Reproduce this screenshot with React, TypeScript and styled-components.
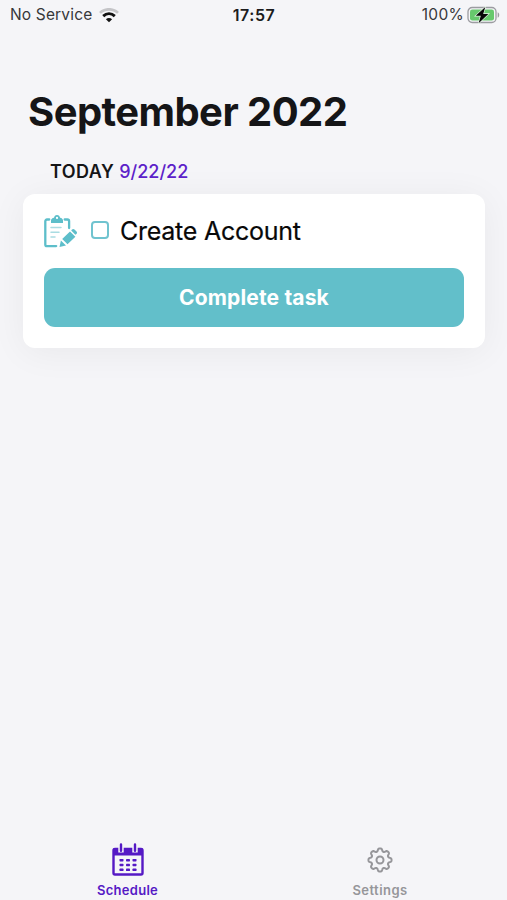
import React from "react";
import styled, { createGlobalStyle } from "styled-components";

const GlobalStyle = createGlobalStyle`
  * { box-sizing: border-box; }
  html, body { margin: 0; padding: 0; background: #f5f5f8; }
`;

const Screen = styled.main`
  display: flex;
  flex-direction: column;
  height: 900px;
  width: 507px;
  overflow: hidden;
  background: #f5f5f8;
  font-family: Inter, "Liberation Sans", sans-serif;
  color: #151517;
`;

const StatusBar = styled.header`
  display: grid;
  grid-template-columns: 1fr auto 1fr;
  align-items: center;
  height: 30px;
  padding: 0 7px 0 10px;
  font-size: 15.5px;
  line-height: 20px;
  color: #37373a;
`;

const StatusGroup = styled.div<{ $end?: boolean }>`
  display: flex;
  align-items: center;
  justify-content: ${(p) => (p.$end ? "flex-end" : "flex-start")};
  gap: ${(p) => (p.$end ? "3px" : "7px")};
  letter-spacing: ${(p) => (p.$end ? "0.3px" : "0.16px")};
`;

const Clock = styled.time`
  margin-right: 2px;
  font-size: 16px;
  font-weight: 600;
  color: #1c1c1e;
  letter-spacing: 0.5px;
`;

const Content = styled.section`
  flex: 1;
  padding: 58px 22px 0 23px;
`;

const Title = styled.h1`
  margin: 0 0 0 5px;
  font-size: 40px;
  line-height: 48px;
  font-weight: 700;
  letter-spacing: -0.56px;
  white-space: nowrap;
`;

const DayLabel = styled.h2`
  display: flex;
  gap: 5px;
  margin: 24px 0 10px 27px;
  font-size: 18px;
  line-height: 24px;
  font-weight: 600;
  letter-spacing: 0.45px;
`;

const DayDate = styled.span`
  font-weight: 500;
  color: #5c21c9;
  letter-spacing: 0;
`;

const Card = styled.article`
  height: 154px;
  padding: 20px 21px 0;
  border-radius: 12px;
  background: #fff;
  box-shadow: 0 4px 36px rgba(0, 0, 0, 0.055);
`;

const TaskRow = styled.div`
  display: flex;
  align-items: center;
  height: 34px;
`;

const Checkbox = styled.span`
  width: 18px;
  height: 18px;
  margin: -3px 11px 0 14px;
  border: 2px solid #70c3cf;
  border-radius: 4px;
`;

const TaskName = styled.span`
  font-size: 25px;
  line-height: 32px;
  letter-spacing: -0.25px;
  color: #080808;
  -webkit-text-stroke: 0.2px #080808;
  white-space: nowrap;
`;

const CompleteButton = styled.button`
  display: block;
  width: 100%;
  height: 59px;
  margin: 20px 0 0;
  padding: 0;
  border: 0;
  border-radius: 11px;
  background: #62bfca;
  color: #fff;
  font: 700 21px/28px Inter, "Liberation Sans", sans-serif;
  letter-spacing: 0.15px;
`;

const TabBar = styled.nav`
  display: grid;
  grid-template-columns: 255px 250px;
  height: 60px;
`;

const Tab = styled.a<{ $active?: boolean }>`
  display: flex;
  flex-direction: column;
  align-items: center;
  color: ${(p) => (p.$active ? "#5519c5" : "#96969a")};
  font-size: 13px;
  line-height: 18px;
  font-weight: 600;
  letter-spacing: ${(p) => (p.$active ? "0.3px" : "0.45px")};
`;

const TabIcon = styled.span`
  display: flex;
  align-items: center;
  height: 39px;
  margin-bottom: 2px;
`;

const WifiIcon = () => (
  <svg width="20" height="15" viewBox="0 0 20 15" fill="none">
    <path d="M1 4.9C6 .1 14 .1 19 4.9" stroke="#c5c5c8" strokeWidth="2.7" />
    <path d="M4.2 8.1c3.4-3 8.2-3 11.6 0" stroke="#111" strokeWidth="3" />
    <path d="M6.9 11.2c1.9-1.6 4.3-1.6 6.2 0L10 14.2z" fill="#111" />
  </svg>
);

const BatteryIcon = () => (
  <svg width="33" height="18" viewBox="0 0 33 18">
    <rect x="1" y="1.5" width="28" height="15" rx="4.2" fill="#f5f5f8" stroke="#9c9ca1" strokeWidth="1.3" />
    <rect x="3" y="3.5" width="24" height="11" rx="2.3" fill="#67c96d" />
    <path d="M30.7 6.3c2 .6 2 4.8 0 5.4z" fill="#9c9ca1" />
    <path d="M18.3.9 8.7 9.8h5.1l-2.2 7.4 9.8-9.3h-5.2z" fill="#080808" stroke="#e8f6e9" strokeWidth="1.3" paintOrder="stroke" />
  </svg>
);

const ClipboardIcon = () => (
  <svg width="33" height="34" viewBox="0 0 33 34" fill="none">
    <path d="M5.2 5.5H3a1.7 1.7 0 0 0-1.7 1.7v23.2A1.7 1.7 0 0 0 3 32.1h9.2M20.7 5.5h2.7a1.7 1.7 0 0 1 1.7 1.7V14" stroke="#5dbeca" strokeWidth="2.3" strokeLinecap="round" />
    <path fillRule="evenodd" d="M7 9V6.6C7 4.8 8.3 4 10 3.7 10.3 2 11.3.9 13 .9s2.8 1.1 3.1 2.8c1.7.3 2.9 1.1 2.9 2.9V9zm6-6.2a1.1 1.1 0 1 0 0 2.2 1.1 1.1 0 0 0 0-2.2z" fill="#5dbeca" />
    <path d="M7 13.4h10M7 18.3h8M7 23h4" stroke="#a9dce2" strokeWidth="1.5" strokeLinecap="round" />
    <path d="m15.5 33 1.4-6.4 5.1 4.8zM18.2 25.1 26 17.6l5.4 5.1-7.9 7.5zM27.2 16.4l.8-.8c.8-.8 1.8-.7 2.5 0l2 2c.7.7.7 1.7-.1 2.4l-1 .8z" fill="#5dbeca" />
  </svg>
);

const calendarDots = [17.2, 22, 26.8].flatMap((y) => [9.5, 16, 22.5].map((x) => ({ x, y })));

const CalendarIcon = () => (
  <svg width="32" height="33" viewBox="0 0 32 33">
    <rect x="1.5" y="6" width="29" height="25.5" rx="1.5" fill="none" stroke="#5519c5" strokeWidth="2.4" />
    <path d="M1.5 5h29v7.5h-29z" fill="#5519c5" />
    <path d="M6.3 3h5.4v6.5H6.3zM20.3 3h5.4v6.5h-5.4z" fill="#f5f5f8" />
    <path d="M9 1.5v6.2M23 1.5v6.2" stroke="#5519c5" strokeWidth="2.4" strokeLinecap="round" />
    {calendarDots.map(({ x, y }) => (
      <rect key={`${x}-${y}`} x={x - 2} y={y - 1.3} width="4" height="2.6" rx="0.7" fill="#5519c5" />
    ))}
  </svg>
);

const gearOutline =
  Array.from({ length: 180 }, (_, i) => {
    const angle = (i / 180) * Math.PI * 2;
    const wave = Math.cos(angle * 8);
    const radius = 10.1 + 1.5 * Math.tanh(1.6 * wave + 0.25);
    return `${i ? "L" : "M"}${(14 + radius * Math.cos(angle)).toFixed(2)} ${(14 + radius * Math.sin(angle)).toFixed(2)}`;
  }).join("") + "Z";

const GearIcon = () => (
  <svg width="28" height="28" viewBox="0 0 28 28" fill="none" stroke="#96969a" strokeWidth="2" strokeLinejoin="round">
    <path d={gearOutline} />
    <circle cx="14" cy="14" r="3.5" />
  </svg>
);

export default function App() {
  return (
    <>
      <GlobalStyle />
      <Screen>
        <StatusBar>
          <StatusGroup><span>No Service</span><WifiIcon /></StatusGroup>
          <Clock>17:57</Clock>
          <StatusGroup $end><span>100%</span><BatteryIcon /></StatusGroup>
        </StatusBar>
        <Content>
          <Title>September 2022</Title>
          <DayLabel>TODAY <DayDate>9/22/22</DayDate></DayLabel>
          <Card>
            <TaskRow>
              <ClipboardIcon />
              <Checkbox role="checkbox" aria-checked="false" aria-label="Create Account" />
              <TaskName>Create Account</TaskName>
            </TaskRow>
            <CompleteButton>Complete task</CompleteButton>
          </Card>
        </Content>
        <TabBar>
          <Tab $active><TabIcon><CalendarIcon /></TabIcon>Schedule</Tab>
          <Tab><TabIcon><GearIcon /></TabIcon>Settings</Tab>
        </TabBar>
      </Screen>
    </>
  );
}
